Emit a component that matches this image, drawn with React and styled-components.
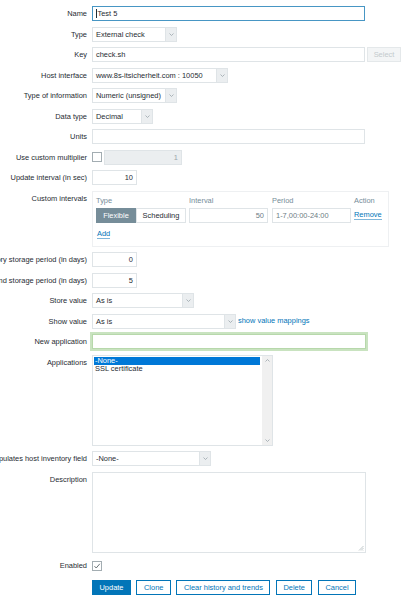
import React from 'react';
import styled, { createGlobalStyle } from 'styled-components';

const GlobalStyle = createGlobalStyle`
  body {
    margin: 0;
    background: #fff;
    font-family: "Liberation Sans", Arial, sans-serif;
    font-size: 7.45px;
    color: #1f2c33;
  }
`;

const Form = styled.div`
  display: grid;
  grid-template-columns: 87px 1fr;
  column-gap: 5px;
  row-gap: 5.5px;
  padding-top: 6px;
  width: 402px;
  overflow: hidden;
`;

const Label = styled.div`
  display: flex;
  justify-content: flex-end;
  align-items: ${p => (p.$top ? 'flex-start' : 'center')};
  padding-top: ${p => p.$offset || 0}px;
  white-space: nowrap;
  line-height: 15px;
`;

const Cell = styled.div`
  display: flex;
  align-items: center;
  gap: ${p => p.$gap ?? 2}px;
`;

const TextBox = styled.div`
  box-sizing: border-box;
  width: ${p => p.$w}px;
  height: 15px;
  line-height: 13px;
  padding: 0 3px;
  border: 1px solid ${p => (p.$focus ? '#4796c4' : p.$glow ? '#b7d8ab' : '#dfe4e7')};
  background: ${p => (p.$disabled ? '#ebeef0' : '#fff')};
  color: ${p => p.$color || '#1f2c33'};
  text-align: ${p => p.$align || 'left'};
  white-space: nowrap;
  overflow: hidden;
  box-shadow: ${p => (p.$glow ? '0 0 0 2px #c9e3c0' : 'none')};
`;

const Caret = styled.span`
  display: inline-block;
  width: 1px;
  height: 9px;
  background: #1f2c33;
  vertical-align: -2px;
  margin-right: 0.5px;
`;

const SelectBox = styled.div`
  box-sizing: border-box;
  width: ${p => p.$w}px;
  height: 15px;
  display: flex;
  border: 1px solid #dfe4e7;
  background: #fff;
`;

const SelectText = styled.div`
  flex: 1;
  padding: 0 3px;
  line-height: 13px;
  white-space: nowrap;
  overflow: hidden;
`;

const SelectArrow = styled.div`
  width: 10px;
  border-left: 1px solid #dfe4e7;
  background: #ebeef0;
  display: flex;
  align-items: center;
  justify-content: center;
`;

const Chevron = ({ up }) => (
  <svg width="5" height="3" viewBox="0 0 5 3">
    <path d={up ? 'M0.5 2.5 L2.5 0.5 L4.5 2.5' : 'M0.5 0.5 L2.5 2.5 L4.5 0.5'} fill="none" stroke="#9aa5ab" strokeWidth="0.8" />
  </svg>
);

const Select = ({ w, children }) => (
  <SelectBox $w={w}>
    <SelectText>{children}</SelectText>
    <SelectArrow>
      <Chevron />
    </SelectArrow>
  </SelectBox>
);

const GhostButton = styled.div`
  box-sizing: border-box;
  width: 34px;
  height: 15px;
  line-height: 13px;
  text-align: center;
  border: 1px solid #e4e8ea;
  background: #f3f5f6;
  color: #c3cacd;
`;

const Check = styled.div`
  box-sizing: border-box;
  width: 10px;
  height: 10px;
  border: 1px solid #a3adb2;
  background: #fff;
  display: flex;
  align-items: center;
  justify-content: center;
`;

const Link = styled.span`
  color: #0275b8;
  white-space: nowrap;
  line-height: 10px;
  border-bottom: ${p => (p.$underline ? '1px solid #7fb6d9' : 'none')};
`;

const IntervalBox = styled.div`
  box-sizing: border-box;
  width: 297px;
  height: 56px;
  border: 1px solid #eef0f2;
  padding: 4px 3px;
`;

const IntervalGrid = styled.div`
  display: grid;
  grid-template-columns: 93px 83px 82px auto;
  row-gap: 2px;
  align-items: center;
`;

const HeadCell = styled.div`
  color: #768d99;
  line-height: 10px;
`;

const Segmented = styled.div`
  display: flex;
`;

const Segment = styled.div`
  box-sizing: border-box;
  width: ${p => p.$w}px;
  height: 15px;
  line-height: 13px;
  text-align: center;
  border: 1px solid ${p => (p.$active ? '#768d99' : '#dfe4e7')};
  background: ${p => (p.$active ? '#768d99' : '#fff')};
  color: ${p => (p.$active ? '#fff' : '#1f2c33')};
`;

const AddRow = styled.div`
  margin-top: 6px;
  padding-left: 1px;
`;

const ListBox = styled.div`
  box-sizing: border-box;
  width: 181px;
  height: 91px;
  border: 1px solid #dfe4e7;
  display: flex;
`;

const Options = styled.div`
  flex: 1;
  padding: 1px 2px 0 1px;
`;

const Option = styled.div`
  line-height: 8.5px;
  padding-left: 1px;
  background: ${p => (p.$selected ? '#0078d7' : 'transparent')};
  color: ${p => (p.$selected ? '#fff' : '#1f2c33')};
`;

const ScrollTrack = styled.div`
  width: 10px;
  background: #f0f0f0;
  display: flex;
  flex-direction: column;
  justify-content: space-between;
  align-items: center;
  padding: 3px 0;
`;

const TextArea = styled.div`
  box-sizing: border-box;
  width: 274px;
  height: 81px;
  border: 1px solid #dfe4e7;
  display: flex;
  align-items: flex-end;
  justify-content: flex-end;
  padding: 1px;
`;

const ButtonRow = styled.div`
  display: flex;
  gap: 5.5px;
  margin-top: 1px;
`;

const Button = styled.div`
  box-sizing: border-box;
  height: 15px;
  line-height: 13px;
  padding: 0 6.5px;
  border: 1px solid #0275b8;
  background: ${p => (p.$primary ? '#0275b8' : '#fff')};
  color: ${p => (p.$primary ? '#fff' : '#0275b8')};
  white-space: nowrap;
`;

const Grip = () => (
  <svg width="6" height="6" viewBox="0 0 6 6">
    <path d="M5.5 1 L1 5.5 M5.5 3 L3 5.5 M5.5 5 L5 5.5" stroke="#a8b1b5" strokeWidth="0.7" />
  </svg>
);

const Tick = () => (
  <svg width="8" height="8" viewBox="0 0 8 8">
    <path d="M1.5 4.2 L3.2 6 L6.8 1.8" fill="none" stroke="#6b7478" strokeWidth="1" />
  </svg>
);

export default function App() {
  return (
    <>
      <GlobalStyle />
      <Form>
        <Label>Name</Label>
        <Cell>
          <TextBox $w={273} $focus>
            <Caret />Test 5
          </TextBox>
        </Cell>

        <Label>Type</Label>
        <Cell><Select w={85}>External check</Select></Cell>

        <Label>Key</Label>
        <Cell>
          <TextBox $w={273}>check.sh</TextBox>
          <GhostButton>Select</GhostButton>
        </Cell>

        <Label>Host interface</Label>
        <Cell><Select w={136}>www.8s-itsicherheit.com : 10050</Select></Cell>

        <Label>Type of information</Label>
        <Cell><Select w={85}>Numeric (unsigned)</Select></Cell>

        <Label>Data type</Label>
        <Cell><Select w={61}>Decimal</Select></Cell>

        <Label>Units</Label>
        <Cell><TextBox $w={273} /></Cell>

        <Label>Use custom multiplier</Label>
        <Cell>
          <Check />
          <TextBox $w={78} $disabled $align="right" $color="#9aa5ab">1</TextBox>
        </Cell>

        <Label>Update interval (in sec)</Label>
        <Cell><TextBox $w={45} $align="right">10</TextBox></Cell>

        <Label $top>Custom intervals</Label>
        <Cell>
          <IntervalBox>
            <IntervalGrid>
              <HeadCell>Type</HeadCell>
              <HeadCell>Interval</HeadCell>
              <HeadCell>Period</HeadCell>
              <HeadCell>Action</HeadCell>
              <Segmented>
                <Segment $w={40} $active>Flexible</Segment>
                <Segment $w={50}>Scheduling</Segment>
              </Segmented>
              <TextBox $w={79} $align="right" $color="#6d7c84">50</TextBox>
              <TextBox $w={79} $color="#6d7c84">1-7,00:00-24:00</TextBox>
              <div><Link $underline>Remove</Link></div>
            </IntervalGrid>
            <AddRow><Link $underline>Add</Link></AddRow>
          </IntervalBox>
        </Cell>

        <Label>History storage period (in days)</Label>
        <Cell><TextBox $w={45} $align="right">0</TextBox></Cell>

        <Label>Trend storage period (in days)</Label>
        <Cell><TextBox $w={45} $align="right">5</TextBox></Cell>

        <Label>Store value</Label>
        <Cell><Select w={102}>As is</Select></Cell>

        <Label>Show value</Label>
        <Cell>
          <Select w={144}>As is</Select>
          <Link>show value mappings</Link>
        </Cell>

        <Label>New application</Label>
        <Cell><TextBox $w={274} $glow /></Cell>

        <Label $top>Applications</Label>
        <Cell>
          <ListBox>
            <Options>
              <Option $selected>-None-</Option>
              <Option>SSL certificate</Option>
            </Options>
            <ScrollTrack>
              <Chevron up />
              <Chevron />
            </ScrollTrack>
          </ListBox>
        </Cell>

        <Label>Populates host inventory field</Label>
        <Cell><Select w={119}>-None-</Select></Cell>

        <Label $top>Description</Label>
        <Cell>
          <TextArea><Grip /></TextArea>
        </Cell>

        <Label>Enabled</Label>
        <Cell>
          <Check><Tick /></Check>
        </Cell>

        <div />
        <ButtonRow>
          <Button $primary>Update</Button>
          <Button>Clone</Button>
          <Button>Clear history and trends</Button>
          <Button>Delete</Button>
          <Button>Cancel</Button>
        </ButtonRow>
      </Form>
    </>
  );
}
